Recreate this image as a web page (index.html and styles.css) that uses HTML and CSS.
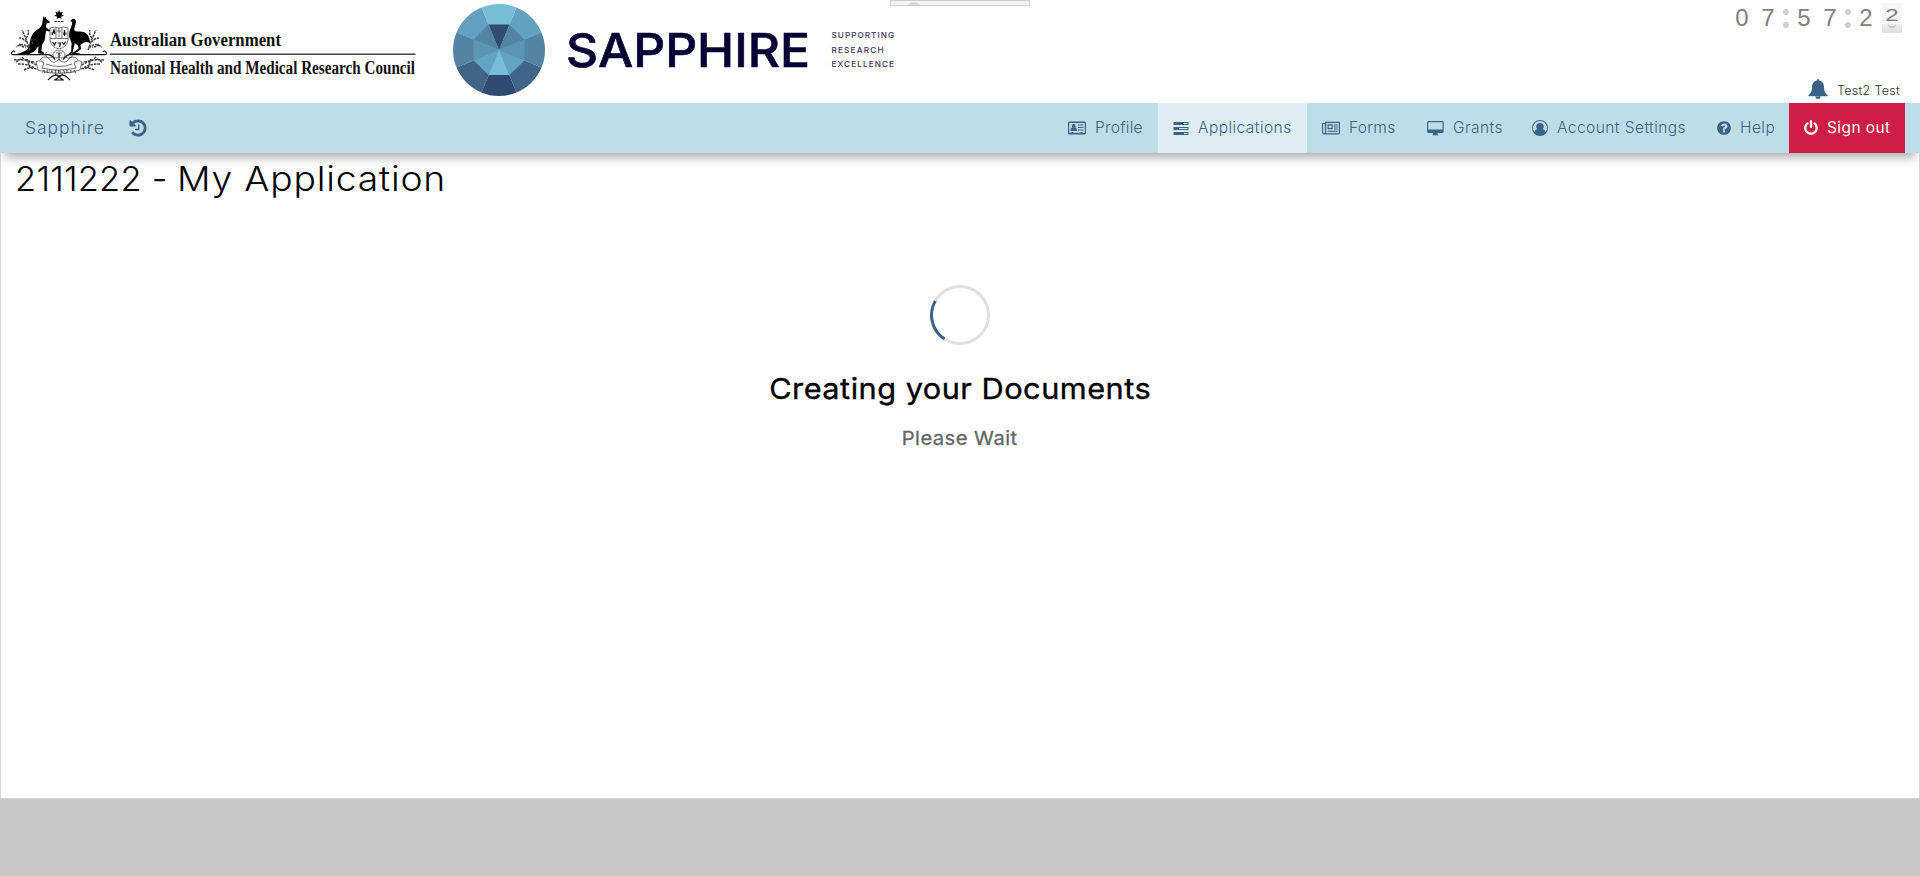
FILE: index.html
```html
<!DOCTYPE html>
<html lang="en">
<head>
<meta charset="utf-8">
<title>Sapphire</title>
<link rel="stylesheet" href="styles.css">
</head>
<body>
<header class="header">
  <svg class="brand" width="930" height="103" viewBox="0 0 930 103" role="img">
    <!-- coat of arms -->
    <g class="arms">
      <path class="ink" d="M59 10l1.200 2.600 2.800-.8-1.300 2.500 2.300 1.600-2.800.5.200 2.800-2.300-1.800-2.300 1.800.2-2.800-2.800-.5 2.300-1.600-1.300-2.500 2.800.8z"/>
      <path class="line bold" d="M54.500 21.500h9" stroke-dasharray="2.500 .7"/>
      <path class="ink" d="M43.500 16l1.200 2 1-1.500.6 2.600 3.600 2.600-.5 1.200-2.800.3-.8 3.800 3.200 2.700 2.600-1 .3 1.300-3 1.600-2.900-.8-.7 5c.2 4-1.300 6.200-3 8.200l-1 6.500 2.700 2.300-.5 1.200-5.500-.8.500-7.200-4.200 5.600-5.600 2.600-12-.2c5-1.400 9.300-2.800 11.500-5.700 2.300-5 1.400-10.600 5.200-15.300 3-3.400 7.300-4.400 8.600-8.400z"/>
      <path class="ink" d="M75.300 19.200l-3.800 2.500-1.300-.3 1.500-1.900c1.800-1.300 4-.6 4.200 1.800.3 3.300-2.400 6.400-1.300 9.300 2.500 2.300 8.400-.7 12.300 3.500 2.300 2.400 3.200 5.800 3.300 9.300-2.500-1.500-4.400-1.700-6.800-.6l-3 2.300.8 3.800-5.500 4.100 4 .3-.2 1.200-7.300-.1-.3-1 6.800-4.800-1-3.400-3-2-1.700 7.500-.7 2.700-3 .8-.2-1 2-1.200.5-8.700-1.200-3.500c-2-3.200-1.300-8 .2-11.500 1-2.500 2-4.600 1.400-7.600z"/>
      <path class="line" fill="#fff" d="M50 28q4.500-2 9 0 4.500-2 9 0v12q-1 7-9 9-8-2-9-9z"/>
      <path class="line" d="M50 38.500h18M56 28v10.500M62 28v10.500M57 31h4M59 28v9M51 33h4M63 33h4"/>
      <path class="bold line" d="M52 35l2-5 1 4M64.500 30v6M63 34h3.500M52.500 42l2 3 1.500-3M57.500 43h3l-1 4M62 42l2 2.500 1.500-3"/>
      <path class="line bold" d="M12 52q-1.500 2.500 1 2.600h34q5 0 8 5M106 52q1.500 2.500-1 2.600H71q-5 0-8 5M12 52q2-2 3 0M106 52q-2-2-3 0"/>
      <path class="line" d="M58 50c-7 2-6 8-1 8s3-6-1-5M60 50c7 2 6 8 1 8s-3-6 1-5M59 50v11M47 52c-4 4 2 8 5 5M71 52c4 4-2 8-5 5"/>
      <!-- wattle sprays -->
      <path class="line twig" d="M30 50c-2-5-4-12-8-20M29 48c-5-5-8-4-13-1M27 42c-3-2-4-4-8-4M26 38c2-2 3-5 2-8M19 44c2 2 3 3 7 3M33 44l-2-5"/>
      <path class="line twig" d="M88 50c2-5 4-12 8-20M89 48c5-5 8-4 13-1M91 42c3-2 4-4 8-4M92 38c-2-2-3-5-2-8M99 44c-2 2-3 3-7 3"/>
      <path class="line twig" d="M14 60c8-1 15 0 24 6M18 64c8 0 12 1 18 5M22 57c3 4 7 4 13 5M24 70c5-3 8-2 13-1M16 62l5-3M27 59l3 9"/>
      <path class="line twig" d="M104 60c-8-1-15 0-24 6M100 64c-8 0-12 1-18 5M96 57c-3 4-7 4-13 5M94 70c-5-3-8-2-13-1M102 62l-5-3M91 59l-3 9"/>
      <path class="line" fill="#fff" d="M36 62q4-3 8 1l-2 5q16 4 34 0l-2-5q4-4 8-1l-2 8q-21 7-42 0z"/>
      <path class="line" d="M40 60c4-5 8-3 10 0s6 3 9-1c3 4 7 4 9 1s6-5 10 0M46 64q13 5 26 0"/>
      <text class="motto" x="42" y="72.500" textLength="34">AUSTRALIA</text>
      <path class="line bold" d="M48 80q6-7 11-4 5-3 11 4M55 74l8 6M63 74l-8 6M54 80h10"/>
    </g>
    <text class="crest" x="110" y="45.500" textLength="171" lengthAdjust="spacingAndGlyphs">Australian Government</text>
    <rect x="110" y="53.500" width="305.500" height="1.400" fill="#333"/>
    <text class="crest" x="110" y="73.500" textLength="305" lengthAdjust="spacingAndGlyphs">National Health and Medical Research Council</text>
    <!-- gem -->
    <clipPath id="gem"><circle cx="499" cy="50" r="46"/></clipPath>
    <g clip-path="url(#gem)">
      <path fill="#76bdd7" d="M499 50L478-1h42z"/>
      <path fill="#64a1c0" d="M499 50L478-1H440v27zM499 50L520-1h38v27z"/>
      <path fill="#5484a5" d="M499 50L440 25.500v49zM499 50l59-24.500v49z"/>
      <path fill="#416589" d="M499 50L440 74.500V101h38zM499 50l59 24.500V101h-38z"/>
      <path fill="#304a72" d="M499 50l-21 51h42z"/>
    </g>
    <path fill="#304a72" d="M499 50l-10.500-25.500h21z"/>
    <path fill="#5383a5" d="M499 50l-10.500-25.500-15 15zM499 50l10.500-25.500 15 15z"/>
    <path fill="#5c94b4" d="M499 50l-25.500-10.500v21zM499 50l25.500-10.500v21z"/>
    <path fill="#64a3c2" d="M499 50l-25.500 10.500 15 14.500zM499 50l25.500 10.500-15 14.500z"/>
    <path fill="#76bdd7" d="M499 50l-10.500 25h21z"/>
    <text class="wordmark" x="566" y="66.500" textLength="244" lengthAdjust="spacingAndGlyphs">SAPPHIRE</text>
    <text class="tagline" x="831.500" y="38.300" textLength="62.500">SUPPORTING</text>
    <text class="tagline" x="831.500" y="52.800" textLength="52">RESEARCH</text>
    <text class="tagline" x="831.500" y="67" textLength="62.500">EXCELLENCE</text>
  </svg>
  <div class="drawer"><span class="drawer-knob"></span></div>
  <div class="session">
    <div class="clock">
      <span class="digit">0</span><span class="digit">7</span><span class="colon"></span>
      <span class="digit">5</span><span class="digit">7</span><span class="colon"></span>
      <span class="digit">2</span><span class="digit flip"><span class="flap">2</span></span>
    </div>
    <div class="user">
      <svg class="bell" width="20" height="20" viewBox="0 0 20 20"><path d="M10 0q1.200 0 1.200 1.500c3 .7 4.800 3 4.800 6 0 4.500 1 6.600 3.500 8.500v1.200H.5V16C3 14.100 4 12 4 7.500c0-3 1.800-5.300 4.800-6Q8.800 0 10 0zM7.300 17.500h5.400Q12.500 20 10 20t-2.700-2.500z"/></svg>
      <span class="user-name">Test2 Test</span>
    </div>
  </div>
</header>
<nav class="nav">
  <a class="home">Sapphire</a>
  <svg class="history" width="20" height="20" viewBox="0 0 1792 1792"><path d="M1664 896q0 156-61 298t-164 245-245 164-298 61q-172 0-327-72.500t-264-204.500q-7-10-6.500-22.500t8.500-20.500l137-138q10-9 25-9 16 2 23 12 73 95 179 147t225 52q104 0 198.500-40.500t163.500-109.500 109.500-163.500 40.500-198.500-40.500-198.500-109.500-163.500-163.500-109.500-198.500-40.500q-98 0-188 35.500t-160 101.500l137 138q31 30 14 69-17 40-59 40h-448q-26 0-45-19t-19-45v-448q0-42 40-59 39-17 69 14l130 129q107-101 244.500-156.500t284.500-55.500q156 0 298 61t245 164 164 245 61 298zm-640-288v448q0 14-9 23t-23 9h-320q-14 0-23-9t-9-23v-64q0-14 9-23t23-9h224v-352q0-14 9-23t23-9h64q14 0 23 9t9 23z"/></svg>
  <div class="menu">
    <a class="item profile"><svg width="18" height="14" viewBox="0 0 18 14"><path fill-rule="evenodd" d="M1.500.5h15q1.500 0 1.500 1.500v10q0 1.500-1.500 1.500h-15Q0 13.500 0 12V2Q0 .5 1.500.5zM1.200 2v9.800h2.300v-.8h1.600v.8h7.600v-.8h1.600v.8h2.500V2z"/><circle cx="5.700" cy="5" r="2"/><path d="M2.600 10V8.500q0-2 1.700-2h2.800q1.700 0 1.700 2V10zM10 3.500h5.500v1H10zM10 6h5.500v1H10zM10 8.500h5.500v1H10z"/></svg><span>Profile</span></a>
    <a class="item apps"><svg width="16" height="14" viewBox="0 0 16 14"><path fill-rule="evenodd" d="M.5 1H15.500V4H.5zM10 2v1h4.500V2zM.5 6H15.500V9H.5zM6 7v1h8.500V7zM.5 11H15.500V14H.5zM11 12v1h3.500v-1z"/></svg><span>Applications</span></a>
    <a class="item forms"><svg width="18" height="14" viewBox="0 0 18 14"><path fill-rule="evenodd" d="M3 .8h15V12q0 1.400-1.400 1.400H1.800Q0 13.400 0 11.600V2h3zM4.200 2v9.800q0 .3-.2.500h12.500q.3 0 .3-.4V2zM1.100 3.100v8.500q0 .8.900.8t.9-.8V3.100zM5.500 3.300h5.200V8.300H5.500zM6.700 4.500v2.600h2.800V4.500zM11.800 3.500h4v1h-4zM11.800 5.500h4v1h-4zM11.800 7.500h4v1h-4zM5.500 9.700h10.300v1H5.500z"/></svg><span>Forms</span></a>
    <a class="item grants"><svg width="17" height="15" viewBox="0 0 17 15"><path fill-rule="evenodd" d="M1.500 0h13.800q1.400 0 1.400 1.400v9.200q0 1.400-1.400 1.400h-4.800q0 1 .7 1.500v.8H5.600v-.8q.7-.5.700-1.500H1.500Q.1 12 .1 10.600V1.400Q.1 0 1.500 0zM1.300 1.200v7.300h14.200V1.200z"/></svg><span>Grants</span></a>
    <a class="item account"><svg width="16" height="16" viewBox="0 0 16 16"><path fill-rule="evenodd" d="M8 0a8 8 0 1 1 0 16A8 8 0 0 1 8 0zm0 1.100a6.900 6.900 0 0 0-5.600 10.900q.7-2.700 2.800-3A3.600 3.600 0 0 1 8 2.900 3.600 3.600 0 0 1 10.800 9q2.100.3 2.800 3A6.900 6.900 0 0 0 8 1.100z"/></svg><span>Account Settings</span></a>
    <a class="item help"><svg width="16" height="16" viewBox="0 0 1792 1792"><path d="M1024 1376v-192q0-14-9-23t-23-9h-192q-14 0-23 9t-9 23v192q0 14 9 23t23 9h192q14 0 23-9t9-23zm256-672q0-88-55.500-163t-138.500-116-170-41q-243 0-371 213-15 24 8 42l132 100q7 6 19 6 16 0 25-12 53-68 86-92 34-24 86-24 48 0 85.500 26t37.500 59q0 38-20 61t-68 45q-63 28-115.500 86.500t-52.500 125.500v36q0 14 9 23t23 9h192q14 0 23-9t9-23q0-19 21.500-49.500t54.500-49.500q32-18 49-28.500t46-35 44.500-48 28-60.500 12.500-81zm384 192q0 209-103 385.500t-279.500 279.500-385.500 103-385.500-103-279.500-279.500-103-385.500 103-385.500 279.500-279.500 385.500-103 385.500 103 279.500 279.500 103 385.500z"/></svg><span>Help</span></a>
    <a class="item signout"><svg width="16" height="16" viewBox="0 0 1792 1792"><path d="M1664 896q0 156-61 298t-164 245-245 164-298 61-298-61-245-164-164-245-61-298q0-182 80.500-343t226.500-270q43-32 95.500-25t83.500 50q32 42 24.500 94.500t-49.500 84.500q-98 74-151.500 181t-53.500 228q0 104 40.500 198.500t109.500 163.500 163.500 109.500 198.500 40.500 198.500-40.500 163.500-109.500 109.500-163.500 40.500-198.500q0-121-53.500-228t-151.500-181q-42-32-49.500-84.500t24.500-94.500q31-43 84-50t95 25q146 109 226.500 270t80.500 343zm-640-768v640q0 52-38 90t-90 38-90-38-38-90v-640q0-52 38-90t90-38 90 38 38 90z"/></svg><span>Sign out</span></a>
  </div>
</nav>
<main class="content">
  <h1 class="title">2111222 - <span class="wide">My Application</span></h1>
  <section class="loading">
    <svg class="spinner" width="60" height="60" viewBox="0 0 60 60"><circle class="track" cx="30" cy="30" r="28.500"/><path class="arc" d="M5.300 15.900A28.500 28.500 0 0 0 14.600 54"/></svg>
    <h2 class="loading-title">Creating your Documents</h2>
    <p class="loading-text">Please Wait</p>
  </section>
</main>
</body>
</html>
```
FILE: styles.css
```css
* { box-sizing: border-box; }
body {
  margin: 0;
  min-height: 876px;
  background: #c7c7c7;
  font-family: Inter, "Open Sans", sans-serif;
  font-weight: 300;
  color: #000;
}
.header {
  position: relative;
  display: flex;
  justify-content: space-between;
  height: 103px;
  background: #fff;
}
.brand { display: block; }
.ink { fill: #000; }
.line { fill: none; stroke: #333; stroke-width: .7; }
path.line[fill="#fff"] { fill: #fff; }
.bold { stroke: #111; stroke-width: 1.200; }
.twig { stroke: #444; stroke-width: 1.500; stroke-dasharray: 2.600 .9; }
.motto { font: 700 5px "Liberation Serif", serif; fill: #222; }
.crest { font: 700 18.500px "Liberation Serif", serif; fill: #111; }
.wordmark { font: 500 47px Inter, sans-serif; fill: #070033; stroke: #070033; stroke-width: .6; }
.tagline { font: 500 8.200px Inter, sans-serif; fill: #3b3360; }
.drawer {
  position: absolute;
  left: 890px;
  top: 0;
  width: 140px;
  height: 6px;
  overflow: hidden;
  background: #f4f3f4;
  border: 1px solid #cfcfcf;
}
.drawer-knob {
  position: absolute;
  left: 16px;
  top: 1px;
  width: 14px;
  height: 14px;
  border-radius: 50%;
  background: #d9d9d9;
}
.session {
  display: flex;
  flex-direction: column;
  align-items: flex-end;
  justify-content: space-between;
  padding: 3px 18px 4px 0;
}
.clock {
  display: flex;
  height: 30px;
  font: 400 24px/30px "Liberation Sans", Arial, sans-serif;
  color: #808080;
}
.digit { width: 20px; margin-left: 6px; text-align: center; }
.flip {
  position: relative;
  background: linear-gradient(#f8f8f8, #f1f1f1 18px, #fff 18px, #fff 20px, #ececec 21px, #dedede);
}
.flap { display: block; transform: scaleY(.72); transform-origin: 0 4px; }
.flip::after {
  content: "";
  position: absolute;
  left: 6px;
  top: 19px;
  width: 8px;
  height: 4px;
  border-bottom: 2px solid #c4c4c4;
  border-radius: 0 0 5px 5px;
}
.colon {
  width: 6px;
  height: 30px;
  margin: 0 -1px 0 5px;
  background: radial-gradient(circle at 3px 9px, #d0d0d0 2.700px, transparent 3.300px), radial-gradient(circle at 3px 22px, #d0d0d0 2.700px, transparent 3.300px);
}
.user { display: flex; align-items: center; gap: 9px; padding-right: 2px; }
.bell { fill: #3b6388; }
.user-name { width: 63px; padding-top: 2px; font-size: 12.500px; letter-spacing: .3px; white-space: nowrap; color: #333; }
.nav {
  position: relative;
  display: flex;
  align-items: center;
  height: 50px;
  padding: 0 15px 0 25px;
  background: #bfdde8;
  color: #3b6388;
  box-shadow: 0 9px 10px -5px rgba(0, 0, 0, .35);
}
.nav svg { fill: #3b6388; flex: none; }
.home { width: 103px; padding-bottom: 1px; font-size: 17.500px; letter-spacing: .95px; }
.menu { display: flex; height: 50px; margin-left: auto; }
.item { display: flex; align-items: center; padding-left: 15px; font-size: 15.500px; letter-spacing: .45px; white-space: nowrap; }
.item svg { margin-right: 9px; }
.item span { padding-bottom: 2px; }
.profile, .forms { letter-spacing: .3px; }
.profile, .forms, .grants { width: 105px; }
.apps { width: 149px; }
.nav .apps { background: #deecf3; }
.account { width: 185px; }
.help { width: 87px; }
.help svg, .signout svg { margin: 0 8px 0 -1px; }
.nav .item.signout { width: 116px; background: #cf1d46; color: #fff; font-weight: 400; letter-spacing: .4px; }
.nav .signout svg { fill: #fff; }
.content {
  height: 646px;
  border: solid #d9d9d9;
  border-width: 0 1px 1px;
  background: #fff;
}
.title { margin: 0; padding: 4px 0 0 14px; font-size: 34.500px; line-height: 44px; font-weight: 300; letter-spacing: .2px; }
.wide { display: inline-block; letter-spacing: .75px; transform: scaleX(1.08); transform-origin: 0 50%; }
.loading { display: flex; flex-direction: column; align-items: center; padding-top: 84px; }
.spinner { fill: none; stroke-width: 3; }
.track { stroke: #e0e0e0; }
.arc { stroke: #3b6388; }
.loading-title {
  margin: 24px 0 0;
  font-size: 29px;
  line-height: 40px;
  font-weight: 400;
  letter-spacing: .45px;
  transform: scaleX(1.06);
  -webkit-text-stroke: .35px #000;
}
.loading-text {
  margin: 17px 0 0;
  font-size: 19px;
  line-height: 26px;
  font-weight: 400;
  letter-spacing: .45px;
  color: #666;
  transform: scaleX(1.06);
  -webkit-text-stroke: .3px #666;
}
```
